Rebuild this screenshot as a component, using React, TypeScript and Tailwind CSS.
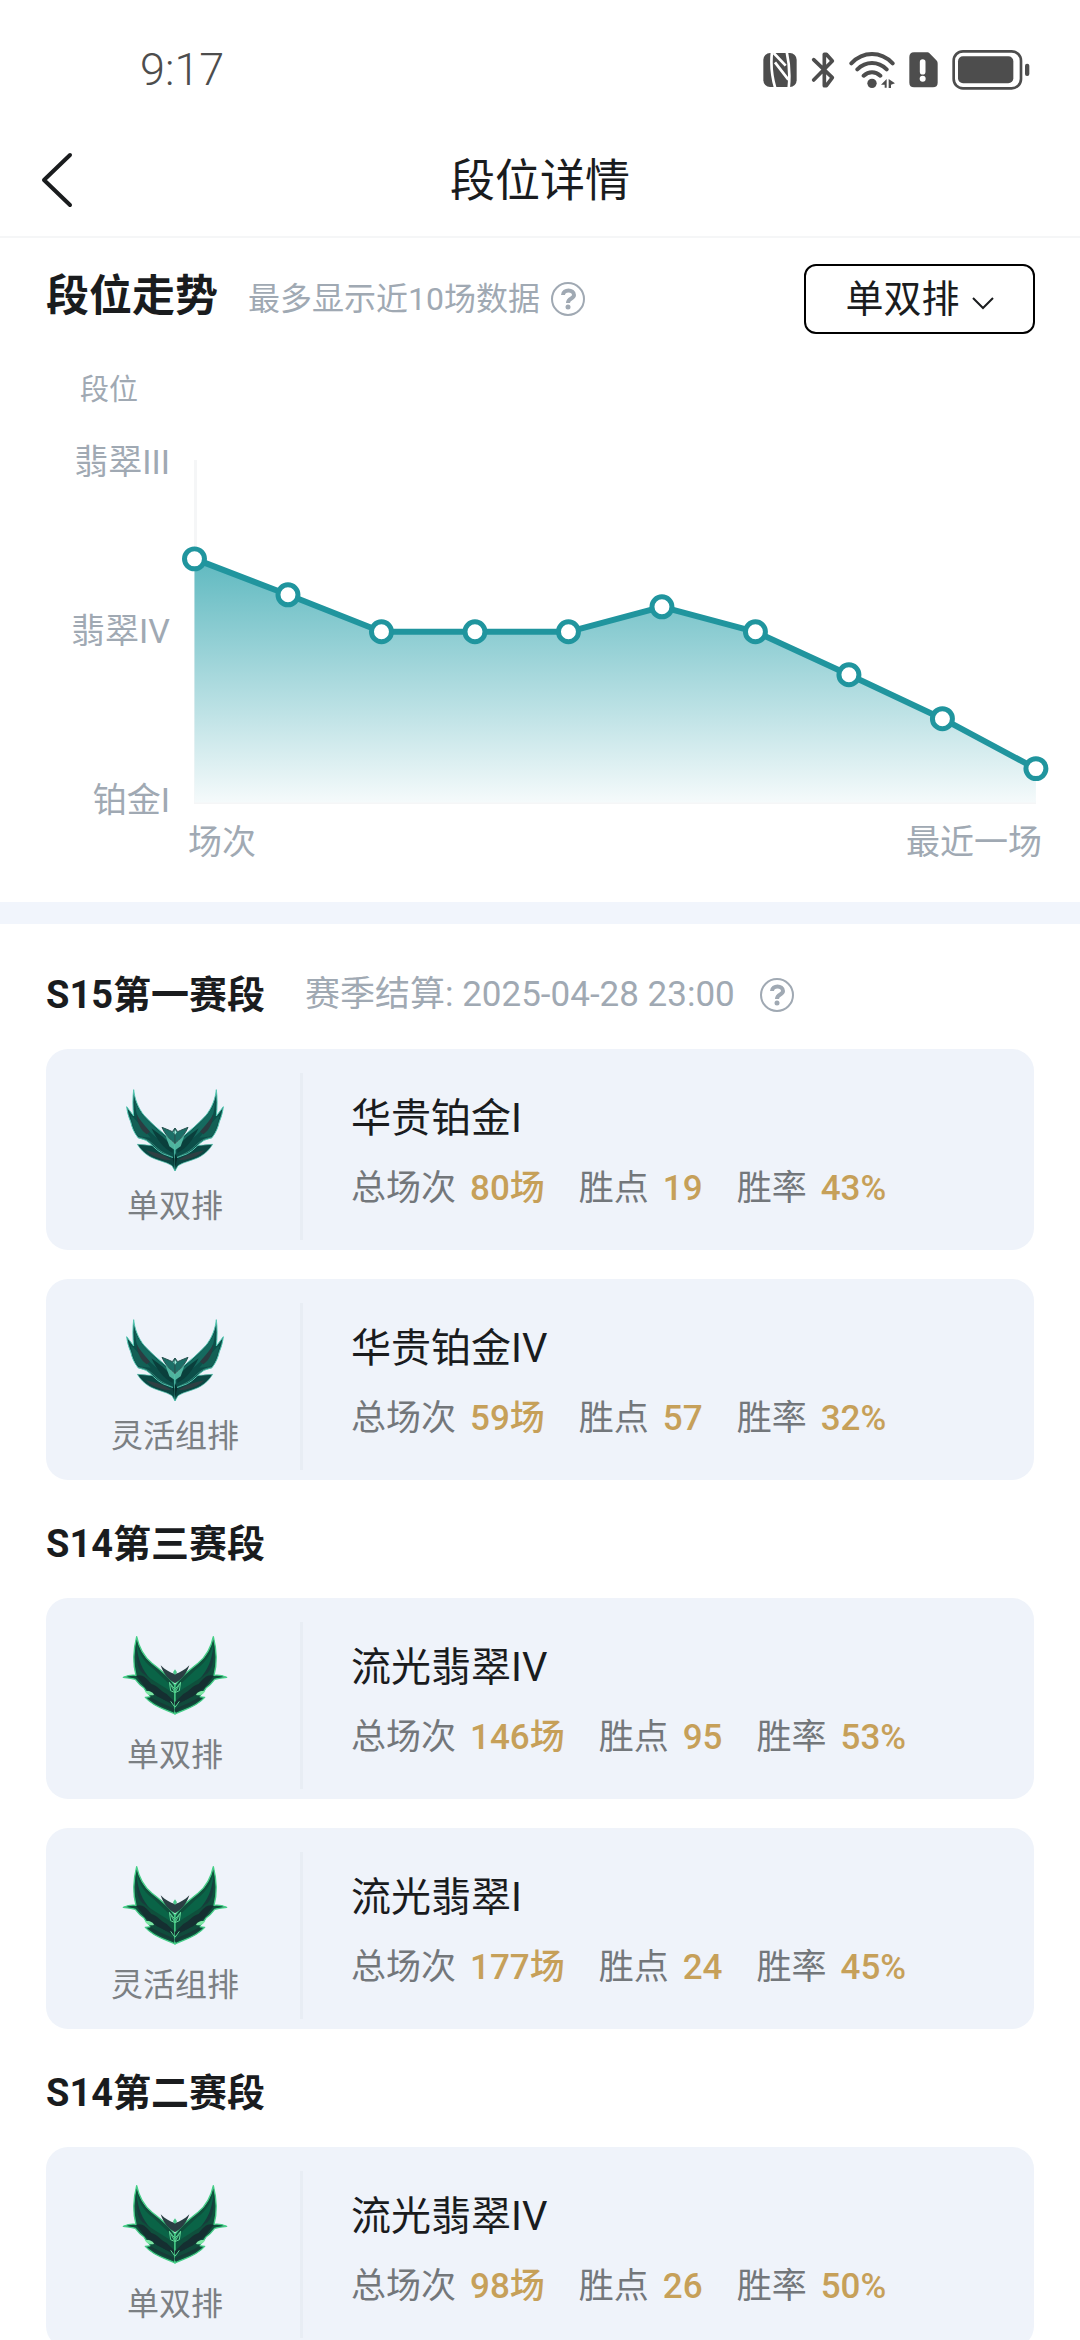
import { useState } from 'react';

type Tier = 'platinum' | 'emerald';

interface Rank {
  queue: string;
  tier: Tier;
  title: string;
  games: number;
  points: number;
  winRate: number;
}

interface Season {
  name: string;
  settledAt?: string;
  ranks: Rank[];
}

const seasons: Season[] = [
  {
    name: 'S15第一赛段',
    settledAt: '2025-04-28 23:00',
    ranks: [
      { queue: '单双排', tier: 'platinum', title: '华贵铂金I', games: 80, points: 19, winRate: 43 },
      { queue: '灵活组排', tier: 'platinum', title: '华贵铂金IV', games: 59, points: 57, winRate: 32 },
    ],
  },
  {
    name: 'S14第三赛段',
    ranks: [
      { queue: '单双排', tier: 'emerald', title: '流光翡翠IV', games: 146, points: 95, winRate: 53 },
      { queue: '灵活组排', tier: 'emerald', title: '流光翡翠I', games: 177, points: 24, winRate: 45 },
    ],
  },
  {
    name: 'S14第二赛段',
    ranks: [
      { queue: '单双排', tier: 'emerald', title: '流光翡翠IV', games: 98, points: 26, winRate: 50 },
    ],
  },
];

// y position of each match inside the chart's viewBox
const trend = [117, 153, 190, 190, 190, 165, 190, 233, 277, 327];
const CHART_BOTTOM = 361;

function StatusBar() {
  return (
    <div className="flex h-[124px] shrink-0 items-center justify-between pt-4 pr-[50px] pl-[140px] text-[#4d4d4d]">
      <span className="text-[45px] font-light">9:17</span>
      <div className="flex items-center gap-3.5">
        {/* NFC */}
        <svg className="h-[36px] w-[34px]" viewBox="65 63 102 108">
          <rect x="66" y="66" width="100" height="102" rx="20" fill="currentColor" />
          <path d="M92 62c-4 36-1 74 10 110M97 66l36 38M101 94l40 52M142 172c4-36 2-74-6-110" fill="none" stroke="#fff" strokeWidth="8" />
        </svg>
        {/* Bluetooth */}
        <svg className="h-[38px] w-[24px]" viewBox="209 60 72 114" fill="none" stroke="currentColor" strokeWidth="11" strokeLinecap="round" strokeLinejoin="round">
          <path d="M217 86l56 54-18 24h-6V70h6l18 20-56 57" />
        </svg>
        {/* Wi-Fi */}
        <svg className="h-[38px] w-[46px]" viewBox="325 60 138 114" fill="none" stroke="currentColor" strokeWidth="12" strokeLinecap="round">
          <path d="M332 97c36-37 88-37 124 0M350 115c26-25 62-25 88 0M369 134c15-14 35-14 50 0" />
          <circle cx="394" cy="157" r="14" fill="currentColor" stroke="none" />
          <path d="M438 144v26h-6v-9h-11zM444 144l19 13-12 4v10h-7z" fill="currentColor" stroke="none" />
        </svg>
        {/* SIM warning */}
        <svg className="h-[36px] w-[29px]" viewBox="508 63 87 108">
          <path d="M523 64h38c4 0 7 1 10 4l19 20c3 3 4 6 4 10v57c0 9-5 14-14 14h-57c-9 0-14-5-14-14V78c0-9 5-14 14-14z" fill="currentColor" />
          <path d="M549 93v29" stroke="#fff" strokeWidth="17" strokeLinecap="round" />
          <circle cx="549" cy="143" r="9" fill="#fff" />
        </svg>
        {/* Battery */}
        <svg className="h-[40px] w-[78px]" viewBox="636 57 234 120" fill="currentColor">
          <rect x="641" y="61" width="202" height="111" rx="28" fill="none" stroke="currentColor" strokeWidth="8" />
          <rect x="654" y="76" width="166" height="81" rx="15" />
          <rect x="855" y="98" width="13" height="37" rx="6" />
        </svg>
      </div>
    </div>
  );
}

function HelpButton() {
  return (
    <button type="button" aria-label="说明" className="block shrink-0 text-[#a0a9b3]">
      <svg className="size-[36px]" viewBox="0 0 36 36" fill="none" stroke="currentColor">
        <circle cx="18" cy="18" r="16" strokeWidth="2" />
        <path d="M13 14c0-6 11-6 11 0 0 4-6 3-6 8" strokeWidth="4" />
        <circle cx="18" cy="26" r="2.5" fill="currentColor" stroke="none" />
      </svg>
    </button>
  );
}

function TrendChart() {
  const points = trend.map((y, i) => ({ x: 12.5 + i * 93.6, y }));
  const line = points.map((p) => `${p.x},${p.y}`).join(' ');
  const last = points[points.length - 1];

  return (
    <div className="pt-9 pr-[31px] pb-10 pl-[46px] text-[34px] leading-10 text-[#a0a9b3]">
      <p className="pl-[34px] text-[29px] leading-10">段位</p>
      <div className="mt-8 flex">
        <div className="mr-3 flex w-[124px] shrink-0 flex-col justify-between text-right">
          <span>翡翠III</span>
          <span>翡翠IV</span>
          <span>铂金I</span>
        </div>
        <svg className="w-full min-w-0 flex-1" viewBox="0 0 868 378" role="img" aria-label="段位走势">
          <defs>
            <linearGradient id="trend-fill" gradientUnits="userSpaceOnUse" x1="0" y1="117" x2="0" y2={CHART_BOTTOM}>
              <stop offset="0" stopColor="#5fb9c0" />
              <stop offset="1" stopColor="#f5fafb" />
            </linearGradient>
          </defs>
          <path d={`M13.5 18V${CHART_BOTTOM}H${last.x}`} fill="none" stroke="#f5f6f7" strokeWidth="3" />
          <polygon points={`${points[0].x},${CHART_BOTTOM} ${line} ${last.x},${CHART_BOTTOM}`} fill="url(#trend-fill)" />
          <polyline points={line} fill="none" stroke="#20959e" strokeWidth="6" strokeLinejoin="round" />
          {points.map((p) => (
            <circle key={p.x} cx={p.x} cy={p.y} r="10" fill="#fff" stroke="#20959e" strokeWidth="5" />
          ))}
        </svg>
      </div>
      <div className="mt-0.5 flex justify-between pr-[7px] pl-[142px]">
        <span>场次</span>
        <span>最近一场</span>
      </div>
    </div>
  );
}

function PlatinumWing() {
  return (
    <>
      <path d="M110 220C130 220 150 226 170 222L223 232V300L214 284C196 272 166 268 146 256C130 246 120 236 110 220Z" fill="#0b4743" stroke="#4cc3ac" strokeWidth="2" />
      <path d="M136 238C160 244 190 250 214 268L192 266C166 260 150 252 136 238Z" fill="#2f3f43" />
      <path d="M99 56C102 84 112 110 130 133C150 155 176 178 204 200L223 224V262L186 248C166 238 150 216 136 208L112 200C100 184 94 170 90 152C84 138 80 124 78 107L99 135C96 108 96 80 99 56Z" fill="#0c4f49" stroke="#55c8b3" strokeWidth="3" strokeLinejoin="round" />
      <path d="M104 92C112 118 136 146 166 172L212 212L216 234C180 212 150 186 122 158C110 140 104 120 104 92Z" fill="#156a5f" />
      <path d="M99 140C112 156 132 176 150 200L112 196C100 180 96 160 90 134Z" fill="#126055" />
      <path d="M108 128C118 150 136 166 148 182L138 190C120 176 110 158 108 128Z" fill="#2b3c41" />
      <path d="M152 172C176 188 198 206 216 228L216 246C188 232 170 208 152 172Z" fill="#0a3f3c" />
      <path d="M112 200C150 200 162 232 190 246L223 262" fill="none" stroke="#3f9c8b" strokeWidth="2" />
      <path d="M184 169L206 178L215 182L223 171V218C208 204 192 190 184 169Z" fill="#1c6f67" stroke="#2b5553" strokeWidth="3" />
      <path d="M194 192L223 220V238L206 226Z" fill="#4fb39e" />
      <path d="M223 246L216 262L223 294Z" fill="#082f2e" />
      <path d="M223 176l-5 8 5 7z" fill="#a4f0df" />
    </>
  );
}

function EmeraldWing() {
  return (
    <>
      <path d="M108 50C116 88 132 112 154 130C180 150 208 172 223 196V282C196 268 160 262 134 232L152 230C140 222 134 212 130 204C118 196 110 186 104 178C92 174 80 174 68 172C82 166 94 164 106 166C96 130 98 90 108 50Z" fill="#0f4f3c" stroke="#46cf88" strokeWidth="4" strokeLinejoin="round" />
      <path d="M110 76C116 110 138 132 162 150L206 192L212 216C182 194 146 176 122 156C108 134 104 104 110 76Z" fill="#0a6447" />
      <path d="M108 78C104 112 108 142 124 158L150 178C124 150 112 118 108 78Z" fill="#173c3b" />
      <path d="M106 168C126 160 138 176 152 192C170 196 180 214 198 222L223 246V258C196 240 172 236 154 216C134 210 124 186 106 168Z" fill="#152f31" />
      <path d="M146 226C176 226 196 246 223 262V276C192 262 168 258 146 226Z" fill="#104c3c" />
      <path d="M148 234C172 252 200 258 223 272" fill="none" stroke="#173b37" strokeWidth="7" />
      <path d="M132 214C144 210 158 216 160 225C150 228 140 225 132 214Z" fill="#7be6a3" />
      <path d="M180 136C194 150 208 158 223 162V190C204 178 190 166 180 136Z" fill="#2a3f43" />
      <path d="M223 148l-6 9 6 8z" fill="#49c98a" />
      <path d="M206 186L210 212L223 218L208 190L223 208M223 262L210 244" fill="none" stroke="#5cd394" strokeWidth="3" />
    </>
  );
}

function Emblem({ tier }: { tier: Tier }) {
  const Wing = tier === 'platinum' ? PlatinumWing : EmeraldWing;
  return (
    <svg className="h-[115px] w-[150px]" viewBox="-2 0 450 345" aria-hidden="true">
      <Wing />
      {/* right half is the left one mirrored */}
      <g transform="translate(446 0) scale(-1 1)">
        <Wing />
      </g>
    </svg>
  );
}

function Stat({ label, value }: { label: string; value: string }) {
  return (
    <div className="flex gap-3.5">
      <dt className="text-[#73777b]">{label}</dt>
      <dd className="font-medium text-[#c6a059]">{value}</dd>
    </div>
  );
}

function RankCard({ rank }: { rank: Rank }) {
  return (
    <article className="flex h-[201px] rounded-[22px] bg-[#eff3fa]">
      <div className="flex w-[254px] shrink-0 flex-col items-center pt-[22px] pl-1">
        <Emblem tier={rank.tier} />
        <span className="text-[32px] leading-10 text-[#7b7f83]">{rank.queue}</span>
      </div>
      <div className="mt-6 mb-2.5 w-[3px] shrink-0 bg-[#e8edf4]" />
      <div className="flex flex-col pt-[46px] pl-12">
        <h3 className="text-[40px] leading-12 text-[#1a1c1e]">{rank.title}</h3>
        <dl className="mt-[26px] flex gap-[34px] text-[35px] leading-10">
          <Stat label="总场次" value={`${rank.games}场`} />
          <Stat label="胜点" value={`${rank.points}`} />
          <Stat label="胜率" value={`${rank.winRate}%`} />
        </dl>
      </div>
    </article>
  );
}

export default function App() {
  const [queue, setQueue] = useState('单双排');

  return (
    <div className="flex h-screen flex-col bg-white font-[Roboto,'Noto_Sans_CJK_SC',sans-serif] text-[#1a1c1e]">
      <StatusBar />

      <header className="grid h-[114px] shrink-0 grid-cols-[1fr_auto_1fr] items-center border-b-2 border-[#f5f6f7] px-10">
        <button type="button" aria-label="返回" className="justify-self-start">
          <svg className="h-[56px] w-[34px]" viewBox="0 0 34 56" fill="none" stroke="currentColor" strokeWidth="4" strokeLinecap="round" strokeLinejoin="round">
            <path d="M30 3L4 28L30 53" />
          </svg>
        </button>
        <h1 className="pt-1 text-[45px] leading-14">段位详情</h1>
      </header>

      <main className="min-h-0 flex-1 overflow-y-auto [scrollbar-width:none]">
        <section>
          <div className="flex items-center pt-[26px] pr-[45px] pl-[46px]">
            <h2 className="pb-1.5 text-[43px] leading-14 font-bold">段位走势</h2>
            <p className="ml-[30px] text-[32px] leading-10 text-[#a0a9b3]">最多显示近10场数据</p>
            <div className="ml-2.5">
              <HelpButton />
            </div>
            <button
              type="button"
              onClick={() => setQueue(queue === '单双排' ? '灵活组排' : '单双排')}
              className="ml-auto flex h-[70px] min-w-[231px] items-center justify-center gap-3 rounded-xl border-2 border-black text-[38px] leading-12"
            >
              {queue}
              <svg className="mt-2 h-[14px] w-[22px]" viewBox="0 0 22 14" fill="none" stroke="currentColor" strokeWidth="2">
                <path d="M1 2L11 12L21 2" />
              </svg>
            </button>
          </div>
          <TrendChart />
        </section>

        <div className="h-[22px] bg-[#f1f5fc]" />

        <div className="flex flex-col gap-[38px] px-[46px] pt-[45px] pb-10">
          {seasons.map((season) => (
            <section key={season.name}>
              <div className="mb-7 flex h-13 items-center">
                <h2 className="text-[38px] leading-13 font-bold">{season.name}</h2>
                {season.settledAt && (
                  <>
                    <p className="ml-10 text-[35px] leading-13 text-[#a0a9b3]">赛季结算: {season.settledAt}</p>
                    <div className="ml-6">
                      <HelpButton />
                    </div>
                  </>
                )}
              </div>
              <div className="flex flex-col gap-[29px]">
                {season.ranks.map((rank) => (
                  <RankCard key={rank.queue} rank={rank} />
                ))}
              </div>
            </section>
          ))}
        </div>
      </main>
    </div>
  );
}
